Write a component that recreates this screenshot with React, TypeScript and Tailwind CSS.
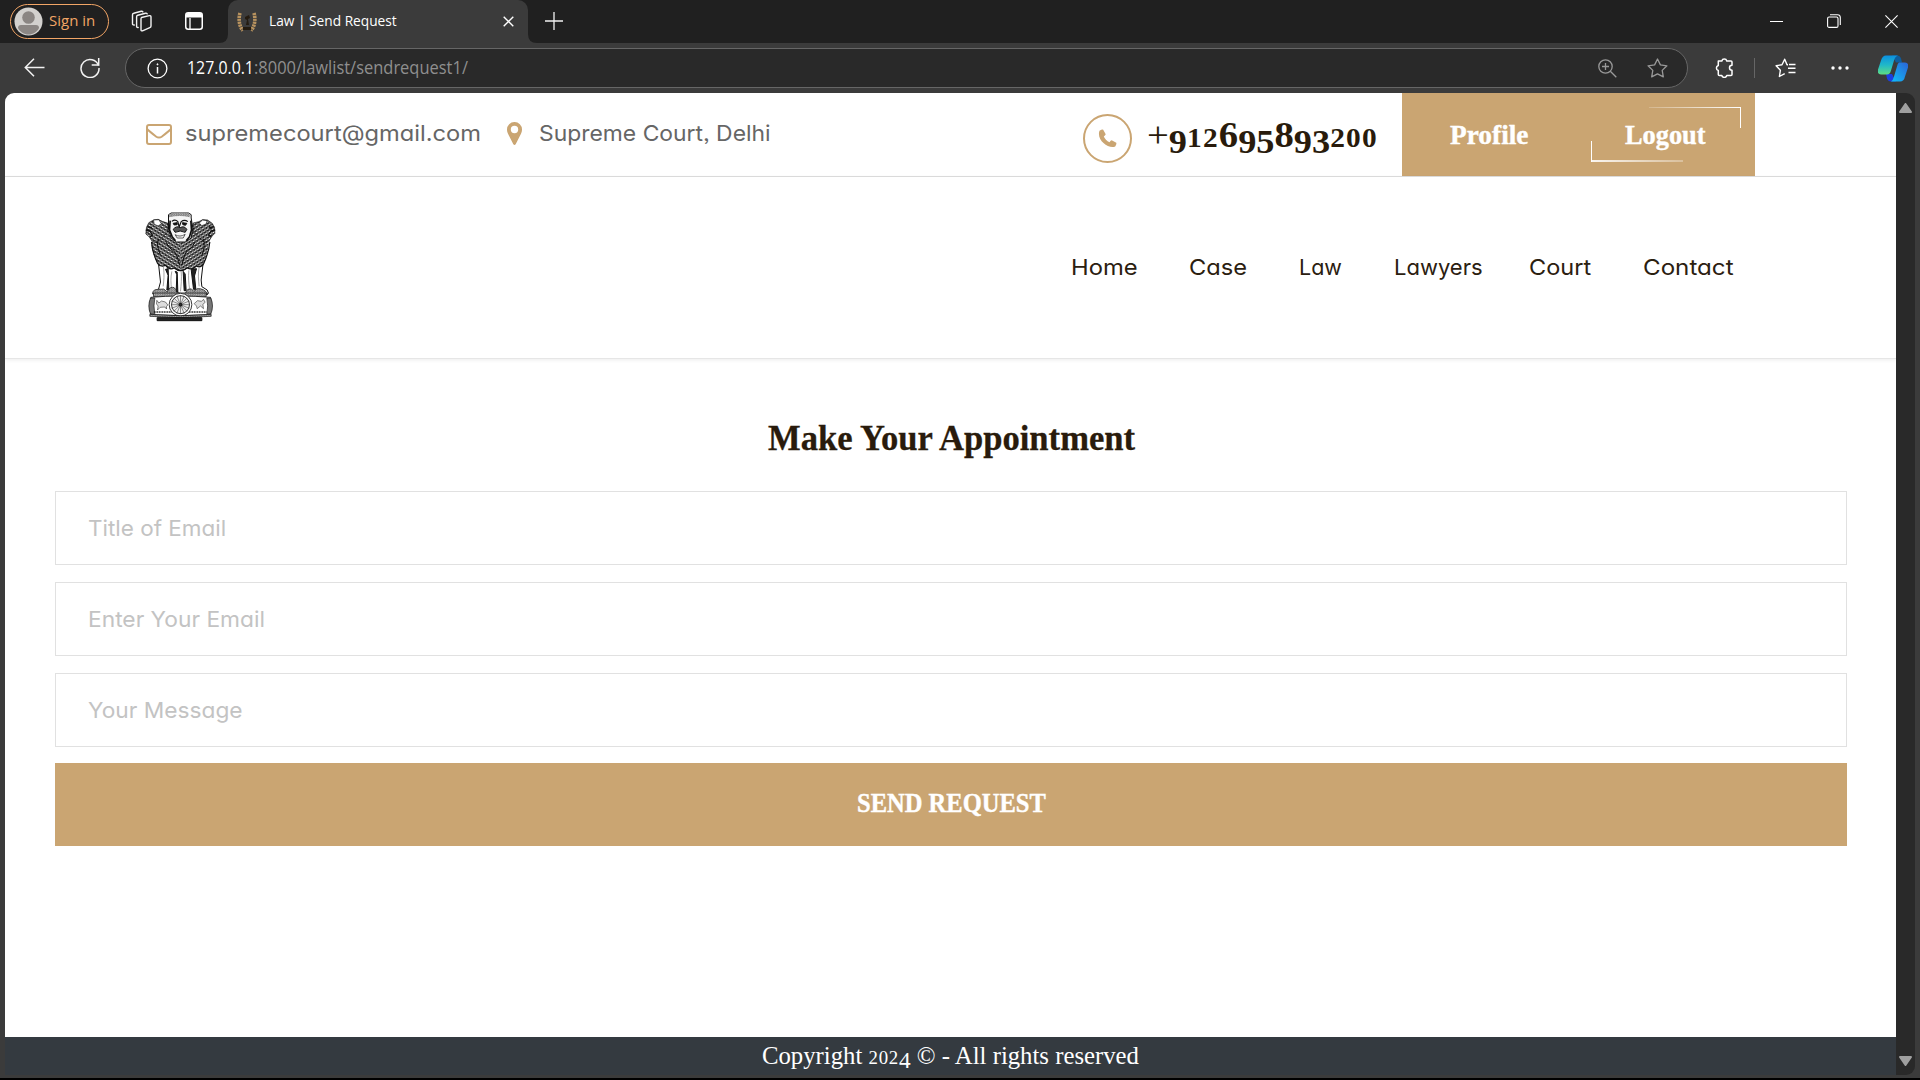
import { useLayoutEffect, useRef, type ReactNode } from "react";

/** One line of text, stretched horizontally so that it fills exactly `w` pixels. */
function Fit({ w, className = "", children }: { w: number; className?: string; children: ReactNode }) {
  const ref = useRef<HTMLSpanElement>(null);
  useLayoutEffect(() => {
    const el = ref.current;
    if (el) el.style.transform = `scaleX(${w / el.offsetWidth})`;
  }, [w]);
  return (
    <span className={`block shrink-0 ${className}`} style={{ width: w }}>
      <span ref={ref} className="inline-block origin-left whitespace-nowrap">
        {children}
      </span>
    </span>
  );
}

/** Old-style figures: 0, 1 and 2 at x-height, 3, 4, 5, 7 and 9 hanging below the baseline. */
function OldStyle({ value }: { value: string }) {
  return (
    <>
      {value.split("").map((c, i) => {
        if ("012".includes(c)) return <span key={i} className="text-[0.76em] tracking-[0.04em]">{c}</span>;
        if ("34579".includes(c)) return <span key={i} className="relative top-[0.17em] text-[0.94em]">{c}</span>;
        if (c === "+") return <span key={i} className="font-normal">{c}</span>;
        return <span key={i}>{c}</span>;
      })}
    </>
  );
}

const sans = "font-[Inter,sans-serif] text-[22px] leading-[30px] [font-feature-settings:'cv11','ss03']";
const serif = "font-['Liberation_Serif',serif]";
const ui = "font-['Open_Sans',sans-serif]";

function TitleBar() {
  return (
    <div className={`flex h-[43px] items-start bg-[#202020] ${ui}`}>
      <div className="ml-[10px] mt-[4px] flex h-[35px] w-[99px] items-center rounded-full border border-[#f2a566]">
        <svg className="ml-[3px]" width="29" height="29" viewBox="0 0 29 29">
          <circle cx="14.500" cy="14.500" r="14" fill="#d3d1ce" />
          <circle cx="14.500" cy="10.500" r="6.300" fill="#8b8683" />
          <path d="M4 21q0-3 3-3h15q3 0 3 3c-2 4-6 6.500-10.500 6.500S6 25 4 21z" fill="#8b8683" />
        </svg>
        <Fit w={46} className="-mt-[3px] ml-[6px] text-[15px] leading-[20px] text-[#f2a566]">Sign in</Fit>
      </div>
      <svg className="ml-[21px] mt-[10px]" width="23" height="23" viewBox="0 0 23 23" fill="none" stroke="#f2f2f2" strokeWidth="1.400" strokeLinejoin="round" strokeLinecap="round">
        <path d="M11.500 7.500l7.800-1.900q1.700-.2 1.700 1.400v9q0 1.200-1.200 1.600l-7.300 3.200q-1.500.4-1.500-1.100V9q0-1.200.5-1.500z" />
        <path d="M8.200 17.500q-1.600.3-1.600-1.300V6.800q0-1.300 1.200-1.600l7.700-2q1.200-.2 1.700.6" />
        <path d="M4.300 15q-1.800.2-1.800-1.300V4.800q0-1.300 1.300-1.600l7.400-1.900q1.200-.2 1.700.6" />
      </svg>
      <svg className="ml-[32px] mt-[12px]" width="18" height="18" viewBox="0 0 18 18">
        <rect x=".75" y=".75" width="16.500" height="16.500" rx="2.500" fill="none" stroke="#fff" strokeWidth="1.500" />
        <path d="M1 3q0-2 2-2h12q2 0 2 2v2.500H1z" fill="#fff" />
        <path d="M5 6v11" stroke="#fff" strokeWidth="1.300" />
      </svg>
      <div className="relative ml-[25px] flex h-[43px] w-[300px] items-center rounded-t-[10px] bg-[#3b3b3b]">
        <svg className="absolute -left-[9px] bottom-0" width="9" height="9"><path d="M9 0v9H0Q9 9 9 0z" fill="#3b3b3b" /></svg>
        <svg className="absolute -right-[9px] bottom-0" width="9" height="9"><path d="M0 0v9h9Q0 9 0 0z" fill="#3b3b3b" /></svg>
        <svg className="ml-[9px]" width="20" height="20" viewBox="0 0 20 20">
          <g fill="none" stroke="#b8935f" strokeWidth="3.600" strokeDasharray="2.200 .7">
            <path d="M3 1C1.500 6 1.700 14 6 18.500" />
            <path d="M17 1c1.500 5 1.300 13-3 17.500" />
          </g>
          <path d="M8 5l4-2 1 3-2 1 1 6h-3l1-5-2-1zM6 15h8v3H6z" fill="#241b10" />
        </svg>
        <Fit w={128} className="-mt-[4px] ml-[12px] text-[15px] leading-[20px] text-white">Law | Send Request</Fit>
        <svg className="ml-[106px]" width="11" height="11" viewBox="0 0 11 11" stroke="#fff" strokeWidth="1.400"><path d="M.7.7l9.600 9.600M10.300.7L.7 10.300" /></svg>
      </div>
      <svg className="ml-[17px] mt-[12px]" width="18" height="18" viewBox="0 0 18 18" stroke="#f2f2f2" strokeWidth="1.300"><path d="M9 0v18M0 9h18" /></svg>
      <svg className="ml-auto mt-[14px]" width="13" height="14"><path d="M0 7.500h13" stroke="#fff" /></svg>
      <svg className="ml-[44px] mt-[14px]" width="14" height="14" viewBox="0 0 14 14" fill="none" stroke="#fff" strokeWidth="1.100">
        <rect x=".6" y="3" width="10.400" height="10.400" rx="1.500" />
        <path d="M3 .7h7.500q2.800 0 2.800 2.800V11" />
      </svg>
      <svg className="ml-[44px] mr-[22px] mt-[15px]" width="13" height="13" viewBox="0 0 13 13" stroke="#fff" strokeWidth="1.100"><path d="M.4.400l12.200 12.200M12.600.4L.4 12.600" /></svg>
    </div>
  );
}

function ToolBar() {
  return (
    <div className={`flex h-[50px] items-center bg-[#3b3b3b] ${ui}`}>
      <svg className="ml-[24px] -mt-[2px]" width="21" height="19" viewBox="0 0 21 19" fill="none" stroke="#f2f2f2" strokeWidth="1.500"><path d="M20.500 9.500H1.500M10 .8L1.300 9.500l8.700 8.700" /></svg>
      <svg className="ml-[35px] -mt-[2px]" width="20" height="21" viewBox="0 0 20 21" fill="none" stroke="#f2f2f2" strokeWidth="1.500">
        <path d="M18.500 8.500A9 9 0 1 0 19 11" />
        <path d="M18.700 1v7h-7" />
      </svg>
      <div className="ml-[25px] flex h-[40px] w-[1563px] items-center rounded-full border border-[#666] bg-[#292929]">
        <svg className="ml-[21px]" width="21" height="21" viewBox="0 0 21 21" fill="none" stroke="#fff" strokeWidth="1.300">
          <circle cx="10.500" cy="10.500" r="9.400" />
          <path d="M10.500 9v6.500" strokeWidth="1.500" />
          <circle cx="10.500" cy="6.300" r=".6" fill="#fff" strokeWidth=".8" />
        </svg>
        <Fit w={67} className="-mt-[2px] ml-[19px] text-[18px] leading-[24px] text-white">127.0.0.1</Fit>
        <Fit w={214} className="-mt-[2px] text-[18px] leading-[24px] text-[#8f8f8f]">:8000/lawlist/sendrequest1/</Fit>
        <svg className="ml-auto" width="19" height="19" viewBox="0 0 19 19" fill="none" stroke="#999" strokeWidth="1.300">
          <circle cx="7.500" cy="7.500" r="6.700" />
          <path d="M12.300 12.300l6 6M7.500 4v7M4 7.500h7" />
        </svg>
        <svg className="ml-[30px] mr-[19px]" width="21" height="20" viewBox="0 0 21 20" fill="none" stroke="#999" strokeWidth="1.300" strokeLinejoin="round">
          <path d="M10.500 1l2.900 5.900 6.500.9-4.700 4.600 1.100 6.500-5.800-3-5.800 3 1.100-6.500L1.100 7.800l6.500-.9z" />
        </svg>
      </div>
      <svg className="ml-[26px] -mt-px" width="20" height="20" viewBox="0 0 20 20" fill="none" stroke="#fff" strokeWidth="1.500" strokeLinejoin="round">
        <path d="M4.300 3h3.500a2.600 2.600 0 0 1 5 0H17q1 0 1 1v3.300a2.500 2.500 0 1 0 0 5V16.500q0 1-1 1h-4.200a2.600 2.600 0 0 1-5 0H5.300q-1 0-1-1v-4a2.600 2.600 0 0 1 0-5z" />
      </svg>
      <div className="ml-[20px] h-[20px] w-px bg-[#666]" />
      <svg className="ml-[20px]" width="21" height="20" viewBox="0 0 21 20" fill="none" stroke="#fff" strokeWidth="1.400" strokeLinejoin="round">
        <path d="M13 6.800h-1L9.700 1.200 7 6.800l-5.900.9 4.300 4.500-1 6.300L9.700 15.600M12.500 6.800h.5M13 10.200h7.500M20.500 6.500H14M13.500 14.500h7" />
      </svg>
      <svg className="ml-[35px]" width="18" height="4" viewBox="0 0 18 4" fill="#fff"><circle cx="2" cy="2" r="1.700" /><circle cx="9" cy="2" r="1.700" /><circle cx="16" cy="2" r="1.700" /></svg>
      <svg className="ml-[29px]" width="30" height="27" viewBox="0 0 30 27">
        <defs>
          <linearGradient id="copA" x1="0" y1="0" x2="0" y2="1"><stop offset="0" stopColor="#0b8fe0" /><stop offset=".5" stopColor="#20b8c8" /><stop offset="1" stopColor="#5fdc83" /></linearGradient>
          <linearGradient id="copB" x1="1" y1="0" x2="0" y2="1"><stop offset="0" stopColor="#2b62d6" /><stop offset="1" stopColor="#10c0f7" /></linearGradient>
        </defs>
        <path d="M14 .5h5q3 0 4 3l1 4h-6z" fill="#0e5d9e" />
        <path d="M8 19h6l4 7.500h-5q-3 0-4-3z" fill="#1c3fe0" />
        <path d="M8 .5h12q-3 1-4 5l-3 10q-1 4-4 4H3q-4 0-3-5l3-9q1.500-5 5-5z" fill="url(#copA)" />
        <path d="M21 7.500h6q4 0 3 5l-3 9q-1 5-5 5h-9q2-1 3-5l3-10q.5-3 2-4z" fill="url(#copB)" />
      </svg>
    </div>
  );
}

function TopBar() {
  return (
    <div className="flex h-[84px] border-b border-[#dedede]">
      <svg className="ml-[141px] mt-[31px]" width="26" height="21" viewBox="0 0 26 21" fill="none" stroke="#caa572" strokeWidth="2">
        <rect x="1" y="1" width="24" height="19" rx="2" />
        <path d="M1 5c3 3 6 5 9 7.500q3 2.200 6 0C19 10 22 8 25 5" />
      </svg>
      <Fit w={296} className={`ml-[13px] mt-[25px] text-[#666] ${sans}`}>supremecourt@gmail.com</Fit>
      <svg className="ml-[26px] mt-[29px]" width="15" height="23" viewBox="0 0 15 23" fill="#caa572" fillRule="evenodd">
        <path d="M7.500 0A7.400 7.400 0 0 0 0 7.500c0 2 .5 3 1 4.200L6.200 22q1.300 1.800 2.600 0L14 11.700c.5-1.200 1-2.200 1-4.200A7.400 7.400 0 0 0 7.500 0zm0 3.800a3.700 3.700 0 1 1 0 7.400 3.700 3.700 0 0 1 0-7.400z" />
      </svg>
      <Fit w={232} className={`ml-[17px] mt-[25px] text-[#666] ${sans}`}>Supreme Court, Delhi</Fit>
      <div className="ml-auto mt-[21px] flex size-[49px] items-center justify-center rounded-full border-2 border-[#caa572]">
        <svg width="19" height="19" viewBox="0 0 19 19" fill="#caa572">
          <path d="M1.500 1.800Q3.800.3 5.200.700L7.700 5.200Q7.500 6.300 5.800 7.500C6.500 9.500 9 12.200 11.500 13.200Q12.700 11.300 13.700 11.200L18.300 13.800Q18.800 15.500 17.200 17.400C11 20.500-2 11 1.500 1.800z" />
        </svg>
      </div>
      <Fit w={231} className={`ml-[15px] mt-[23px] text-[35px] leading-[40px] font-bold text-[#291b0c] ${serif}`}>
        <OldStyle value="+912695893200" />
      </Fit>
      <div className={`ml-[24px] mr-[141px] flex h-[83px] w-[353px] bg-[#caa572] text-[27px] leading-[36px] font-bold text-white ${serif}`}>
        <Fit w={78} className="ml-[48px] mt-[24px] [-webkit-text-stroke:0.4px_white]">Profile</Fit>
        <div className="relative ml-[63px] mt-[14px] h-[55px] w-[150px]">
          <span className="absolute right-0 top-0 h-px w-[92px] bg-linear-to-r from-white/20 to-white" />
          <span className="absolute right-0 top-0 h-[21px] w-px bg-white" />
          <span className="absolute bottom-0 left-0 h-[2px] w-[92px] bg-linear-to-r from-white/90 to-white/30" />
          <span className="absolute bottom-0 left-0 h-[21px] w-px bg-white" />
          <Fit w={81} className="ml-[34px] mt-[10px] [-webkit-text-stroke:0.4px_white]">Logout</Fit>
        </div>
      </div>
    </div>
  );
}

/** Four-lion emblem with the wheel on its plinth. */
function Emblem() {
  return (
    <svg className="-mt-[2px] ml-[139px]" width="72" height="110" viewBox="75 50 215 330">
      <defs>
        <pattern id="maneL" width="11" height="9" patternUnits="userSpaceOnUse" patternTransform="rotate(32)">
          <rect width="11" height="9" fill="#fff" />
          <path d="M0 2q5 6 11 0M-5 7q5 5 10 0M5 7q5 5 11 0" fill="none" stroke="#0c0c0c" strokeWidth="3.200" />
        </pattern>
        <pattern id="maneR" width="11" height="9" patternUnits="userSpaceOnUse" patternTransform="rotate(-32)">
          <rect width="11" height="9" fill="#fff" />
          <path d="M0 2q5 6 11 0M-5 7q5 5 10 0M5 7q5 5 11 0" fill="none" stroke="#0c0c0c" strokeWidth="3.200" />
        </pattern>
        <pattern id="grain" width="7" height="6" patternUnits="userSpaceOnUse">
          <rect width="7" height="6" fill="#ddd" />
          <path d="M0 1h4M3 4h4" stroke="#222" strokeWidth="2" />
        </pattern>
      </defs>
      <g stroke="#111" strokeWidth="3" strokeLinejoin="round">
        <path d="M118 205l6 55-6 22-14 10 4 6h156l4-4-4-10-16-10-2-20 6-52z" fill="#fff" />
        <path d="M139 222l8 18-4 44h6l-2-64zM168 228l5 10-2 52h5l-2-60zM192 228l3 58h6l-3-50zM216 222l7 60h7l-4-40 6-22z" fill="#222" />
        <path d="M133 215c3 25 1 40-1 58M158 228c-4 20-3 35-1 52M186 228c2 20 0 40-2 60M209 225c-2 20 0 40 2 55M240 215c-4 20-2 40 0 58" fill="none" stroke="#777" strokeWidth="2" />
        <path d="M100 296q0-14 16-14l18-1 10 9 8-12q16-8 20 12l12 4 14 0 8-12q12-6 18 6l10-8q20-2 32 16z" fill="url(#grain)" strokeWidth="2" />
        <path d="M97 140c6-24 24-44 52-54l36 40v96c-6 6-12 4-20-4-10 5-20 0-26-8-9 5-18 2-24-6-10-18-20-42-18-64z" fill="url(#maneL)" stroke="none" />
        <path d="M272 140c-6-24-24-44-52-54l-36 40v96c6 6 14 4 20-4 10 5 20 2 28-6 9 5 16 2 22-8 8-18 16-42 14-64z" fill="url(#maneR)" stroke="none" />
        <path d="M97 140c2 24 10 46 18 64 6 8 15 11 24 6 6 8 16 13 26 8 12 10 26 10 39 0 10 5 20 2 28-6 9 5 16 2 22-8 8-18 16-40 18-64" fill="none" strokeWidth="3.500" />
        <path d="M82 96l7-14 14-8 14-2 12 6 18 6-2 26-14 14-18 18-14-4-9-14-10-8z" fill="url(#maneL)" strokeWidth="2" />
        <path d="M286 96l-7-12-14-10-14-1-12 6-17 4 0 26 14 14 20 18 14-5 9-14 8-8z" fill="url(#maneR)" strokeWidth="2" />
        <path d="M103 74l16-1 8 12-10 7-12-5zM240 83l10-9 14 2-3 10-13 5z" fill="#fff" strokeWidth="2" />
        <path d="M80 104l12 3 8 12-8 6M288 104l-12 3-8 12 8 6M84 94l14 4M284 94l-14 4" fill="none" strokeWidth="4" />
        <path d="M148 68l0-10 8-5h52l8 5 0 10 5 30-5 30-18 12h-26l-16-12-8-26z" fill="#f4f4f4" />
        <path d="M150 56q32-8 62 0l0 10q-30-8-62 0z" fill="url(#grain)" stroke="none" />
        <path d="M158 78q10-8 18 1l4 16 6-16q10-8 20 0" fill="none" strokeWidth="3.500" />
        <path d="M162 84l12-2 0 6-9 1zM190 82l13 2-4 6-8-2z" fill="#111" />
        <path d="M153 76l-2 28 8 20 10 12M215 76l2 28-6 20-10 12" fill="none" strokeWidth="5" />
        <path d="M162 102q10-12 21-5 12-7 20 5l-5 9q-15-8-30 0z" fill="#555" />
        <path d="M168 118q14 9 30-1l-6 11h-18z" fill="#fff" strokeWidth="2" />
        <path d="M140 140q12 22 22 26t20 44M228 140q-12 22-22 26t-18 44M118 130q-8 20 6 50M252 130q8 20-4 50" fill="none" strokeWidth="3" />
        <rect x="103" y="293" width="158" height="11" fill="url(#grain)" strokeWidth="2" />
        <path d="M95 306q86-8 179 0 6 27-1 52-88 6-178 0-8-27 0-52z" fill="#fff" strokeWidth="2.500" />
        <path d="M94 308q-10 24 0 48l13 1q-5-26 0-49zM275 308q10 24 0 48l-12 1q5-26 0-49z" fill="#777" strokeWidth="2" />
        <path d="M113 315l6 8 8-6 12 3 7 9-4 4v8l-5-6-14 1-8 8 2-12-5-6zM225 325l10-9 12 2 6-6 5 9-7 6 2 13-9-8-10 8-2-8z" fill="#ddd" strokeWidth="1.500" />
        <path d="M104 350h160" strokeWidth="5" strokeDasharray="3 2" />
        <circle cx="184" cy="328" r="34" fill="#fff" strokeWidth="2.500" />
        <circle cx="184" cy="328" r="27" fill="#eee" strokeWidth="2.500" />
        <g strokeWidth="1.400">
          <path d="M156 328h56M184 300v56M164 308l40 40M204 308l-40 40M158 317l52 22M158 339l52-22M173 302l22 52M195 302l-22 52" />
        </g>
        <circle cx="184" cy="328" r="4" fill="#333" />
        <path d="M92 357q94 9 184 0v6q-94 8-184 0z" fill="url(#grain)" strokeWidth="2" />
        <path d="M114 367h134v9H114z" fill="#222" />
      </g>
    </svg>
  );
}

function Nav() {
  return (
    <div className="flex h-[182px] items-center border-b border-[#e6e6e6] shadow-[0_1px_4px_rgba(0,0,0,0.08)]">
      <Emblem />
      <nav className={`-mt-[2px] ml-auto mr-[163px] flex text-[#2b2010] ${sans}`}>
        <Fit w={67}>Home</Fit>
        <Fit w={58} className="ml-[51px]">Case</Fit>
        <Fit w={43} className="ml-[52px]">Law</Fit>
        <Fit w={89} className="ml-[52px]">Lawyers</Fit>
        <Fit w={62} className="ml-[46px]">Court</Fit>
        <Fit w={90} className="ml-[52px]">Contact</Fit>
      </nav>
    </div>
  );
}

function Field({ label, w }: { label: string; w: number }) {
  return (
    <div className={`mb-[17px] flex h-[74px] items-center border border-[#e1e1e1] pl-[32px] text-[#c3c3c3] ${sans}`}>
      <Fit w={w} className="-mt-px">{label}</Fit>
    </div>
  );
}

export default function App() {
  return (
    <div className="flex h-[1080px] w-[1920px] flex-col overflow-hidden border-b-2 border-black bg-[#3b3b3b]">
      <TitleBar />
      <ToolBar />
      <div className="ml-[5px] mr-[5px] flex h-[982px] overflow-hidden rounded-t-[9px] rounded-br-[9px]">
        <div className="flex w-[1891px] flex-col bg-white">
          <TopBar />
          <Nav />
          <main className="flex-1 pl-[50px] pr-[49px] pt-[57px]">
            <Fit w={367} className={`mx-auto mb-[30px] h-[45px] text-[36px] leading-[45px] font-bold text-[#291b0c] [-webkit-text-stroke:0.3px_#291b0c] ${serif}`}>
              Make Your Appointment
            </Fit>
            <Field label="Title of Email" w={138} />
            <Field label="Enter Your Email" w={177} />
            <Field label="Your Message" w={155} />
            <div className={`-mt-px flex h-[83px] items-center justify-center bg-[#caa572] text-[27px] font-bold text-white [-webkit-text-stroke:0.4px_white] ${serif}`}>
              <Fit w={189} className="-mt-[2px]">SEND REQUEST</Fit>
            </div>
          </main>
          <footer className={`flex h-[38px] items-center justify-center bg-[#343a40] text-[25px] leading-[36px] text-white ${serif}`}>
            <Fit w={377} className="mt-[2px]">
              Copyright <OldStyle value="2024" /> © - All rights reserved
            </Fit>
          </footer>
        </div>
        <div className="flex w-[19px] flex-col items-center justify-between bg-[#292929] pb-[9px] pt-[10px]">
          <svg width="13" height="10" viewBox="0 0 13 10"><path d="M6.500 1L12 9H1z" fill="#9f9f9f" stroke="#9f9f9f" strokeLinejoin="round" strokeWidth="2" /></svg>
          <svg width="13" height="10" viewBox="0 0 13 10"><path d="M6.500 9L12 1H1z" fill="#9f9f9f" stroke="#9f9f9f" strokeLinejoin="round" strokeWidth="2" /></svg>
        </div>
      </div>
    </div>
  );
}
